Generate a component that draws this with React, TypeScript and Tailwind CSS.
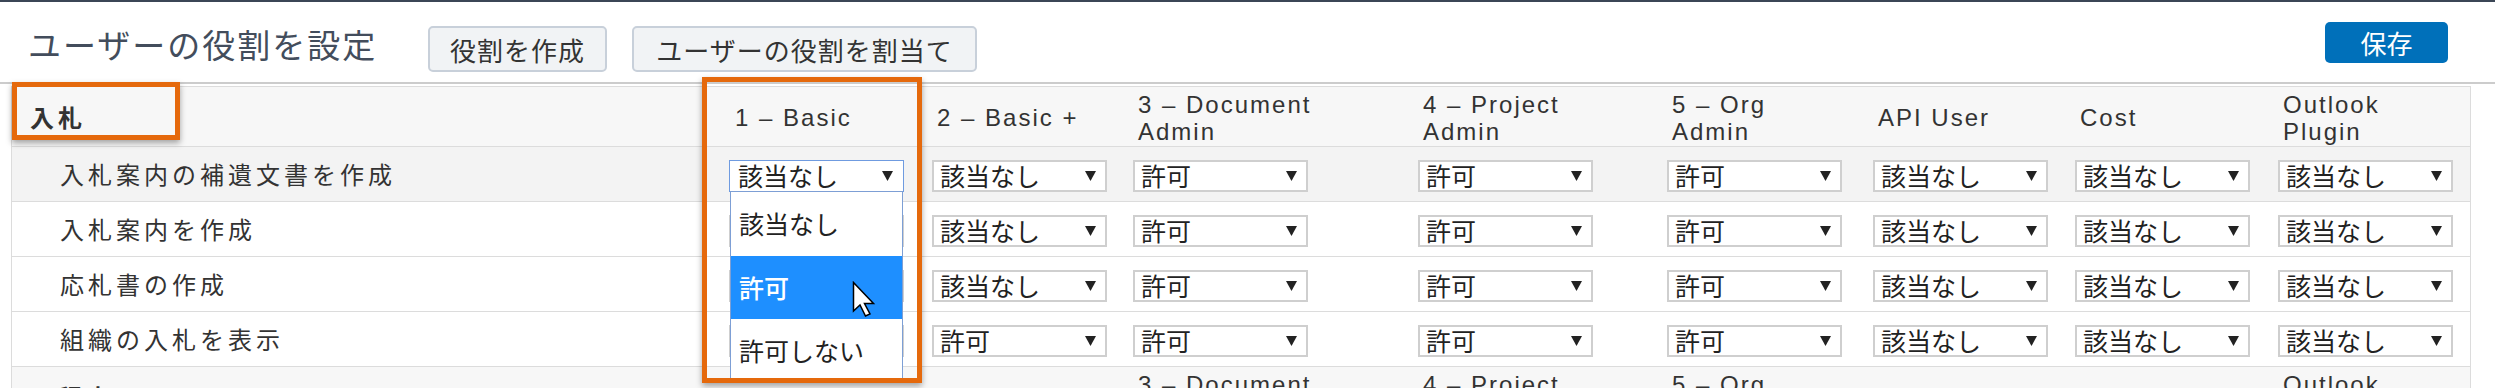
import React from "react";

const JP = '"Noto Sans CJK JP", "Noto Sans", sans-serif';
const LAT = '"Liberation Sans", "Noto Sans CJK JP", sans-serif';

const HEADERS: string[][] = [
  ["1 – Basic"],
  ["2 – Basic +"],
  ["3 – Document", "Admin"],
  ["4 – Project", "Admin"],
  ["5 – Org", "Admin"],
  ["API User"],
  ["Cost"],
  ["Outlook", "Plugin"],
];

const ROWS: { label: string; values: string[] }[] = [
  { label: "入札案内の補遺文書を作成", values: ["該当なし", "該当なし", "許可", "許可", "許可", "該当なし", "該当なし", "該当なし"] },
  { label: "入札案内を作成", values: ["該当なし", "該当なし", "許可", "許可", "許可", "該当なし", "該当なし", "該当なし"] },
  { label: "応札書の作成", values: ["該当なし", "該当なし", "許可", "許可", "許可", "該当なし", "該当なし", "該当なし"] },
  { label: "組織の入札を表示", values: ["該当なし", "許可", "許可", "許可", "許可", "該当なし", "該当なし", "該当なし"] },
];

const GRID = "grid grid-cols-[718px_202px_201px_285px_249px_206px_202px_203px_192px]";

function Arrow() {
  return (
    <svg width="11" height="10" viewBox="0 0 11 10" className="shrink-0">
      <polygon points="0,0 11,0 5.5,10" fill="#222222" />
    </svg>
  );
}

function Select({ value, focused }: { value: string; focused?: boolean }) {
  return (
    <div
      className={
        focused
          ? "w-[175px] h-[32px] bg-white border border-[#6f9be0] flex items-center justify-between pl-[8px] pr-[10px]"
          : "w-[175px] h-[32px] bg-white border-2 border-[#cfcfcf] flex items-center justify-between pl-[6px] pr-[9px]"
      }
    >
      <span className="text-[25px] leading-none text-[#222222]" style={{ fontFamily: JP }}>
        {value}
      </span>
      <Arrow />
    </div>
  );
}

function HeaderRow({ label }: { label: string }) {
  return (
    <div className={GRID + " h-[60px] bg-[#f7f7f7] border-b border-[#dcdcdc]"}>
      <div className="flex items-center pl-[18px]">
        <span className="text-[24px] font-bold tracking-[4px] text-[#333333]" style={{ fontFamily: JP }}>
          {label}
        </span>
      </div>
      {HEADERS.map((h, i) => (
        <div key={i} className="flex flex-col justify-center pl-[5px] pt-[2px]">
          {h.map((line, j) => (
            <span
              key={j}
              className="block text-[24px] leading-[27px] tracking-[2px] text-[#333333] whitespace-nowrap"
              style={{ fontFamily: LAT }}
            >
              {line}
            </span>
          ))}
        </div>
      ))}
    </div>
  );
}

function Cursor() {
  return (
    <svg width="25" height="37" viewBox="0 0 25 37">
      <path
        d="M1.5 1.5 L1.5 30 L8 24 L13.5 35 L18 33 L12.5 22.5 L21.5 22.5 Z"
        fill="#ffffff"
        stroke="#000000"
        strokeWidth="1.5"
        strokeLinejoin="miter"
      />
    </svg>
  );
}

export default function App() {
  return (
    <div className="relative w-[2495px] h-[388px] overflow-hidden bg-white">
      <div className="h-[2px] bg-[#3b4656]" />
      <div className="h-[80px] flex items-start pl-[28px] pr-[47px]">
        <div className="w-[400px] mt-[23px] shrink-0">
          <span
            className="text-[33px] leading-[38px] tracking-[2px] text-[#434d5c] whitespace-nowrap"
            style={{ fontFamily: JP }}
          >
            ユーザーの役割を設定
          </span>
        </div>
        <button
          className="mt-[24px] w-[179px] h-[46px] rounded-[5px] border-2 border-[#c8d0da] bg-[#f1f3f5] flex items-center justify-center text-[26px] tracking-[1px] text-[#333333] shrink-0"
          style={{ fontFamily: JP }}
        >
          役割を作成
        </button>
        <button
          className="mt-[24px] ml-[25px] w-[345px] h-[46px] rounded-[5px] border-2 border-[#c8d0da] bg-[#f1f3f5] flex items-center justify-center text-[26px] tracking-[1px] text-[#333333] shrink-0"
          style={{ fontFamily: JP }}
        >
          ユーザーの役割を割当て
        </button>
        <div className="flex-1" />
        <button
          className="mt-[20px] w-[123px] h-[41px] rounded-[5px] bg-[#0070ba] flex items-center justify-center text-[26px] text-white shrink-0"
          style={{ fontFamily: JP }}
        >
          保存
        </button>
      </div>
      <div className="h-[2px] bg-[#cccccc]" />
      <div className="h-[2px]" />
      <div className="ml-[11px] w-[2460px] border-l border-r border-t border-[#dcdcdc]">
        <HeaderRow label="入札" />
        {ROWS.map((r, ri) => (
          <div
            key={ri}
            className={
              GRID +
              " h-[55px] border-b border-[#dcdcdc] " +
              (ri === 0 ? "bg-[#f3f3f3]" : "bg-white")
            }
          >
            <div className="flex items-center pl-[48px]">
              <span className="text-[24px] tracking-[4px] text-[#333333] whitespace-nowrap" style={{ fontFamily: JP }}>
                {r.label}
              </span>
            </div>
            {r.values.map((v, ci) => (
              <div key={ci} className={"flex items-center pt-[3px] " + (ci === 0 ? "-ml-[1px]" : "")}>
                <Select value={v} focused={ri === 0 && ci === 0} />
              </div>
            ))}
          </div>
        ))}
        <HeaderRow label="工程表" />
      </div>

      {/* Open dropdown list */}
      <div className="absolute left-[730px] top-[191px] w-[173px] bg-white border border-[#7d9fd5]" style={{ fontFamily: JP }}>
        <div className="h-[64px] flex items-center pl-[8px] text-[25px] text-[#222222]">該当なし</div>
        <div className="h-[63px] flex items-center pl-[8px] text-[25px] font-medium text-white bg-[#1e8fff]">許可</div>
        <div className="h-[63px] flex items-center pl-[8px] text-[25px] text-[#222222]">許可しない</div>
      </div>

      {/* Orange highlight boxes */}
      <div className="absolute left-[12px] top-[82px] w-[168px] h-[58px] border-[5px] border-[#e5690c] shadow-[0_3px_6px_rgba(0,0,0,0.35)]" />
      <div className="absolute left-[702px] top-[77px] w-[220px] h-[306px] border-[5px] border-[#e5690c] shadow-[0_3px_6px_rgba(0,0,0,0.35)]" />

      {/* Mouse cursor */}
      <div className="absolute left-[852px] top-[281px]">
        <Cursor />
      </div>
    </div>
  );
}
